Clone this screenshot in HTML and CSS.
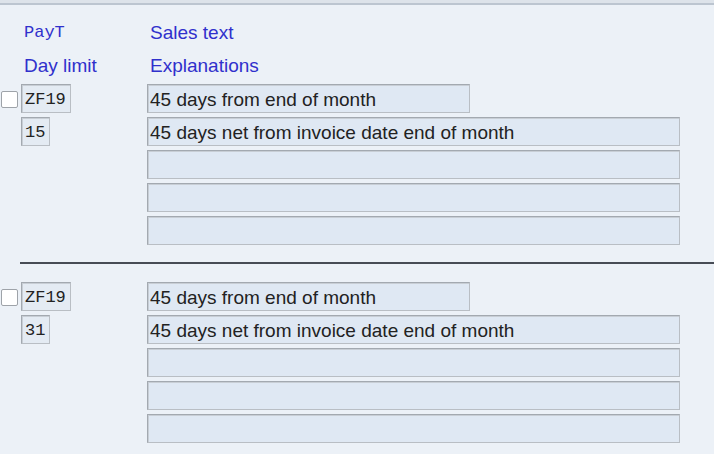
FILE: index.html
```html
<!DOCTYPE html>
<html>
<head>
<meta charset="utf-8">
<link rel="stylesheet" href="styles.css">
</head>
<body>
<div class="topbar"></div>
<div class="page">
  <div class="grid head">
    <div class="cell"></div>
    <div class="lbl mono">PayT</div>
    <div class="lbl">Sales text</div>
    <div class="cell"></div>
    <div class="lbl">Day limit</div>
    <div class="lbl">Explanations</div>
  </div>

  <div class="grid block">
    <div class="cb-cell"><span class="cb"></span></div>
    <div class="cell"><span class="fld mono w50">ZF19</span></div>
    <div class="cell"><span class="fld w323">45 days from end of month</span></div>

    <div class="cell"></div>
    <div class="cell"><span class="fld mono w29">15</span></div>
    <div class="cell"><span class="fld wfull">45 days net from invoice date end of month</span></div>

    <div class="cell"></div><div class="cell"></div>
    <div class="cell"><span class="fld wfull"></span></div>
    <div class="cell"></div><div class="cell"></div>
    <div class="cell"><span class="fld wfull"></span></div>
    <div class="cell"></div><div class="cell"></div>
    <div class="cell"><span class="fld wfull"></span></div>
  </div>

  <div class="sep"></div>

  <div class="grid block">
    <div class="cb-cell"><span class="cb"></span></div>
    <div class="cell"><span class="fld mono w50">ZF19</span></div>
    <div class="cell"><span class="fld w323">45 days from end of month</span></div>

    <div class="cell"></div>
    <div class="cell"><span class="fld mono w29">31</span></div>
    <div class="cell"><span class="fld wfull">45 days net from invoice date end of month</span></div>

    <div class="cell"></div><div class="cell"></div>
    <div class="cell"><span class="fld wfull"></span></div>
    <div class="cell"></div><div class="cell"></div>
    <div class="cell"><span class="fld wfull"></span></div>
    <div class="cell"></div><div class="cell"></div>
    <div class="cell"><span class="fld wfull"></span></div>
  </div>
</div>
</body>
</html>
```
FILE: styles.css
```css
html, body {
  margin: 0;
  padding: 0;
  background: #ecf1f7;
  font-family: "Liberation Sans", Arial, sans-serif;
  font-size: 19px;
  color: #222;
  overflow: hidden;
}
.topbar {
  height: 3px;
  background: #dde3ea;
  border-bottom: 2px solid #bcc5d0;
}
.page {
  padding-top: 13px;
}
.grid {
  display: grid;
  grid-template-columns: 21px 126px 533px;
  grid-auto-rows: 29px;
  row-gap: 4px;
}
.head {
  margin-bottom: 4px;
}
.cell {
  display: flex;
  align-items: stretch;
}
.cb-cell {
  display: flex;
  align-items: center;
  padding-left: 1px;
  padding-top: 2px;
}
.cb {
  display: block;
  width: 15px;
  height: 15px;
  background: #fff;
  border: 1px solid #9ea3a9;
  border-radius: 2px;
}
.lbl {
  color: #3030cc;
  padding-left: 3px;
  padding-top: 4px;
  line-height: 22px;
  white-space: nowrap;
}
.mono {
  font-family: "Liberation Mono", "Courier New", monospace;
  font-size: 17px;
}
.fld {
  display: block;
  box-sizing: border-box;
  height: 29px;
  padding: 4px 0 0 2px;
  line-height: 21px;
  background: #dfe8f3;
  border: 1px solid #a3a9b0;
  border-bottom-color: #b9bec4;
  border-right-color: #b9bec4;
  box-shadow: inset 1px 1px 0 #c8ced5;
  white-space: nowrap;
  overflow: hidden;
}
.fld.mono {
  padding-left: 3px;
  background: #e4ebf3;
}
.w50 { width: 50px; }
.w29 { width: 29px; }
.w323 { width: 323px; }
.wfull { width: 533px; }
.sep {
  height: 2px;
  background: #474c55;
  margin: 17px 0 18px 20px;
}
```
